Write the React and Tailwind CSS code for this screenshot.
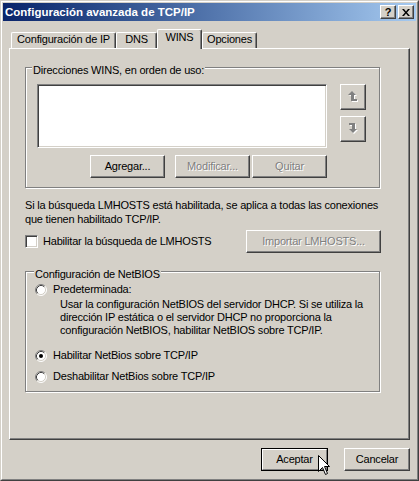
import React from "react";

const raised =
  "border border-t-white border-l-white border-r-[#404040] border-b-[#404040] shadow-[inset_-1px_-1px_0_#808080]";
const sunken =
  "border border-t-[#808080] border-l-[#808080] border-r-white border-b-white shadow-[inset_1px_1px_0_#404040,inset_-1px_-1px_0_#d4d0c8]";
const disabledText = "text-[#808080] [text-shadow:1px_1px_0_#ffffff]";
const etched =
  "relative border border-[#808080] shadow-[inset_1px_1px_0_#ffffff,1px_1px_0_#ffffff]";

function Btn({ children, disabled, className = "" }) {
  return (
    <div className={`${raised} h-[23px] flex items-center justify-center ${className}`}>
      <span className={disabled ? disabledText : ""}>{children}</span>
    </div>
  );
}

function Radio({ checked }) {
  return (
    <svg width="12" height="12" viewBox="0 0 12 12" className="shrink-0">
      <circle cx="6" cy="6" r="5" fill="#ffffff" />
      <path d="M2.11 9.89 A5.5 5.5 0 0 1 9.89 2.11" fill="none" stroke="#808080" strokeWidth="1" />
      <path d="M9.89 2.11 A5.5 5.5 0 0 1 2.11 9.89" fill="none" stroke="#ffffff" strokeWidth="1" />
      <path d="M2.82 9.18 A4.5 4.5 0 0 1 9.18 2.82" fill="none" stroke="#404040" strokeWidth="1" />
      <path d="M9.18 2.82 A4.5 4.5 0 0 1 2.82 9.18" fill="none" stroke="#d4d0c8" strokeWidth="1" />
      {checked && <circle cx="6" cy="6" r="2" fill="#000000" />}
    </svg>
  );
}

function UpIcon() {
  const pts = "4,0 8,4 6,4 6,8 9,8 9,10 3,10 3,4 0,4";
  return (
    <svg width="11" height="12" viewBox="0 0 11 12">
      <polygon points={pts} fill="#ffffff" transform="translate(1,1)" />
      <polygon points={pts} fill="#808080" />
    </svg>
  );
}

function DownIcon() {
  const pts = "0,0 6,0 6,6 8,6 4,10 0,6 3,6 3,2 0,2";
  return (
    <svg width="11" height="12" viewBox="0 0 11 12">
      <polygon points={pts} fill="#ffffff" transform="translate(2,1)" />
      <polygon points={pts} fill="#808080" transform="translate(1,0)" />
    </svg>
  );
}

function Tab({ children, selected, w }) {
  if (selected) {
    return (
      <div
        className={`${w} relative z-10 h-[20px] -mb-px bg-[#d4d0c8] border-t border-l border-t-white border-l-white border-r border-r-[#404040] shadow-[inset_-1px_0_0_#808080] rounded-t-[2px] flex justify-center pt-px`}
      >
        {children}
      </div>
    );
  }
  return (
    <div
      className={`${w} h-[16px] border-t border-l border-t-white border-l-white border-r border-r-[#404040] shadow-[inset_-1px_0_0_#808080] rounded-t-[2px] flex justify-center`}
    >
      {children}
    </div>
  );
}

export default function App() {
  return (
    <div className="relative w-[419px] h-[481px] bg-[#d4d0c8] border border-t-[#d4d0c8] border-l-[#d4d0c8] border-r-[#404040] border-b-[#404040] font-['Liberation_Sans',Arial,sans-serif] text-[11px] tracking-[-0.2px] leading-[13px] text-black select-none whitespace-nowrap">
      <div className="h-full border border-t-white border-l-white border-r-[#808080] border-b-[#808080] p-px flex flex-col">
        {/* Title bar */}
        <div className="h-[18px] flex items-center bg-linear-to-r from-[#0a246a] to-[#a6caf0] pl-[2px] pr-[2px]">
          <span className="flex-1 text-white font-bold text-[11.5px] tracking-normal">
            Configuración avanzada de TCP/IP
          </span>
          <div className={`${raised} bg-[#d4d0c8] w-[16px] h-[14px] flex items-center justify-center font-bold text-[11px] leading-[11px] tracking-normal`}>
            ?
          </div>
          <div className={`${raised} bg-[#d4d0c8] w-[16px] h-[14px] ml-[2px] flex items-center justify-center`}>
            <svg width="8" height="7" viewBox="0 0 8 7">
              <path d="M0 0L2 0L4 2.5L6 0L8 0L5 3.5L8 7L6 7L4 4.5L2 7L0 7L3 3.5Z" fill="#000" />
            </svg>
          </div>
        </div>

        {/* Tabs */}
        <div className="ml-[8px] mt-[8px] h-[19px] flex items-end">
          <Tab w="w-[105px]">Configuración de IP</Tab>
          <Tab w="w-[41px]">DNS</Tab>
          <Tab w="w-[45px]" selected>WINS</Tab>
          <Tab w="w-[55px]">Opciones</Tab>
        </div>

        {/* Panel */}
        <div className="ml-[6px] w-[401px] h-[392px] border-t border-l border-t-white border-l-white border-r border-b border-r-[#404040] border-b-[#404040] shadow-[inset_-1px_-1px_0_#808080]">
          <div className="ml-[15px] mt-[18px] w-[356px] flex flex-col">
            {/* WINS group */}
            <div className={`${etched} w-[355px] h-[121px] pl-[11px] pt-[16px]`}>
              <span className="absolute left-[6px] top-[-4px] px-px bg-[#d4d0c8]">
                Direcciones WINS, en orden de uso:
              </span>
              <div className="flex">
                <div className={`${sunken} bg-white w-[290px] h-[64px]`} />
                <div className="ml-[13px] flex flex-col gap-[6px]">
                  <div className={`${raised} w-[26px] h-[26px] flex items-center justify-center`}>
                    <UpIcon />
                  </div>
                  <div className={`${raised} w-[26px] h-[26px] flex items-center justify-center`}>
                    <DownIcon />
                  </div>
                </div>
              </div>
              <div className="w-[290px] mt-[7px] flex justify-end">
                <Btn className="w-[75px]">Agregar...</Btn>
                <Btn className="w-[75px] ml-[10px]" disabled>Modificar...</Btn>
                <Btn className="w-[75px] ml-[2px]" disabled>Quitar</Btn>
              </div>
            </div>

            <p className="mt-[10px] leading-[14px]">
              Si la búsqueda LMHOSTS está habilitada, se aplica a todas las conexiones
              <br />
              que tienen habilitado TCP/IP.
            </p>

            <div className="mt-[4px] h-[23px] flex items-center">
              <div className={`${sunken} bg-white w-[13px] h-[13px] shrink-0`} />
              <span className="ml-[5px]">Habilitar la búsqueda de LMHOSTS</span>
              <Btn className="w-[135px] ml-auto" disabled>Importar LMHOSTS...</Btn>
            </div>

            {/* NetBIOS group */}
            <div className={`${etched} mt-[18px] w-[355px] h-[121px] pl-[9px] pt-[11px]`}>
              <span className="absolute left-[8px] top-[-4px] px-px bg-[#d4d0c8]">
                Configuración de NetBIOS
              </span>
              <div className="h-[13px] flex items-center">
                <Radio />
                <span className="ml-[6px]">Predeterminada:</span>
              </div>
              <div className="ml-[25px] mt-[2px]">
                Usar la configuración NetBIOS del servidor DHCP. Si se utiliza la
                <br />
                dirección IP estática o el servidor DHCP no proporciona la
                <br />
                configuración NetBIOS, habilitar NetBIOS sobre TCP/IP.
              </div>
              <div className="mt-[12px] h-[13px] flex items-center">
                <Radio checked />
                <span className="ml-[6px]">Habilitar NetBios sobre TCP/IP</span>
              </div>
              <div className="mt-[8px] h-[13px] flex items-center">
                <Radio />
                <span className="ml-[6px]">Deshabilitar NetBios sobre TCP/IP</span>
              </div>
            </div>
          </div>
        </div>

        {/* Footer buttons */}
        <div className="mt-[8px] pr-[6px] flex justify-end">
          <div className="w-[67px] h-[23px] border border-black">
            <div className="h-full border border-t-white border-l-white border-r-[#808080] border-b-[#808080] flex items-center justify-center">
              Aceptar
            </div>
          </div>
          <Btn className="w-[66px] ml-[16px]">Cancelar</Btn>
        </div>
      </div>

      {/* Mouse cursor */}
      <svg
        className="absolute left-[317px] top-[454px]"
        width="13"
        height="21"
        viewBox="0 0 13 21"
      >
        <path
          d="M0.5 0.5 L0.5 16.5 L4.5 12.5 L7.5 19.5 L9.5 18.5 L6.5 11.5 L11.5 11.5 Z"
          fill="#ffffff"
          stroke="#000000"
          strokeWidth="1"
        />
      </svg>
    </div>
  );
}
